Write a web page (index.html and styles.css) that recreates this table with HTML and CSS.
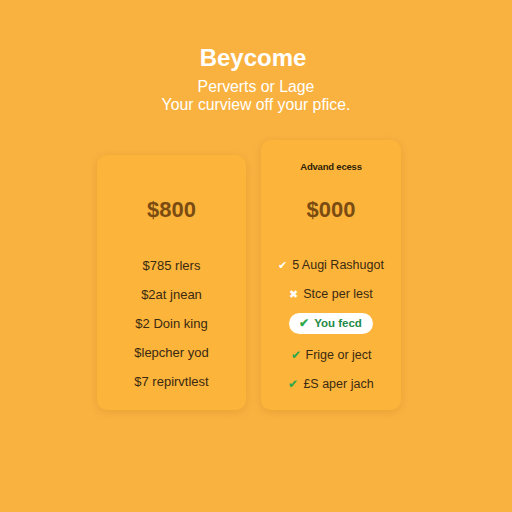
FILE: index.html
```html
<!DOCTYPE html>
<html>
<head>
<meta charset="utf-8">
<link rel="stylesheet" href="styles.css">
</head>
<body>
<main class="page">
  <header class="hero">
    <h1 class="title">Beycome</h1>
    <p class="sub">Perverts or Lage</p>
    <p class="sub">Your curview off your pfice.</p>
  </header>
  <section class="plans">
    <div class="card card-basic">
      <div class="price">$800</div>
      <ul class="list">
        <li>$785 rlers</li>
        <li>$2at jnean</li>
        <li>$2 Doin king</li>
        <li>$lepcher yod</li>
        <li>$7 repirvtlest</li>
      </ul>
    </div>
    <div class="card card-adv">
      <div class="label">Advand ecess</div>
      <div class="price">$000</div>
      <ul class="list">
        <li><span class="ico ico-white">&#10004;</span>5 Augi Rashugot</li>
        <li><span class="ico ico-white">&#10006;</span>Stce per lest</li>
        <li class="pill-row"><span class="pill"><span class="ico-green">&#10004;</span>You fecd</span></li>
        <li><span class="ico ico-green">&#10004;</span>Frige or ject</li>
        <li><span class="ico ico-green">&#10004;</span>£S aper jach</li>
      </ul>
    </div>
  </section>
</main>
</body>
</html>
```
FILE: styles.css
```css
html, body {
  margin: 0;
  padding: 0;
  background: #f9b240;
  font-family: "Liberation Sans", Arial, sans-serif;
}
.page {
  width: 512px;
  height: 512px;
  display: flex;
  flex-direction: column;
  align-items: center;
}
.hero {
  text-align: center;
  padding-top: 44px;
  color: #fff;
}
.title {
  margin: 0 0 6px;
  font-size: 24px;
  font-weight: 700;
  line-height: 28px;
  padding-right: 6px;
}
.sub {
  margin: 0;
  font-size: 15.8px;
  line-height: 18px;
}
.plans {
  display: flex;
  align-items: flex-end;
  gap: 15px;
  margin-top: 26px;
  padding-right: 14px;
}
.card {
  background: #fdb43a;
  border-radius: 10px;
  box-shadow: 0 2px 8px rgba(150, 90, 0, 0.18);
  display: flex;
  flex-direction: column;
  align-items: center;
}
.card-basic {
  width: 149px;
  height: 255px;
}
.card-adv {
  width: 140px;
  height: 270px;
}
.label {
  margin-top: 21px;
  font-size: 9.5px;
  font-weight: 700;
  color: #2e1e08;
  letter-spacing: -0.2px;
}
.price {
  font-size: 22px;
  font-weight: 700;
  color: #7a4c12;
  margin-top: 43px;
  line-height: 24px;
}
.card-adv .price {
  margin-top: 26px;
}
.list {
  list-style: none;
  margin: 35px 0 0;
  padding: 0;
  display: flex;
  flex-direction: column;
  align-items: center;
  gap: 12px;
  font-size: 13px;
  color: #3a2a12;
}
.card-adv .list {
  font-size: 12.5px;
}
.list li {
  height: 17px;
  line-height: 17px;
  white-space: nowrap;
  display: flex;
  align-items: center;
}
.list li.pill-row {
  margin-bottom: 3px;
}
.ico {
  font-size: 11px;
  margin-right: 5px;
}
.ico-white {
  color: #fff;
}
.ico-green {
  color: #2ba84a;
  font-size: 12px;
  margin-right: 5px;
}
.pill {
  background: #fff;
  border-radius: 11px;
  padding: 0 11px 0 10px;
  height: 21px;
  line-height: 21px;
  font-size: 11.5px;
  font-weight: 700;
  color: #1f8a48;
  display: inline-flex;
  align-items: center;
}
```
